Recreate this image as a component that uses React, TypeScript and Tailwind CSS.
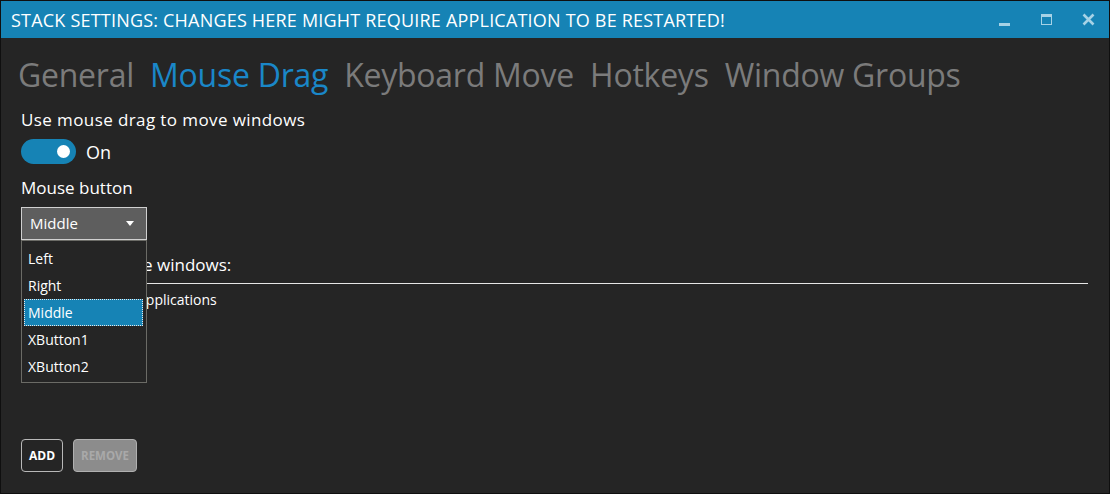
import React from "react";

const TABS = [
  { name: "General", active: false },
  { name: "Mouse Drag", active: true },
  { name: "Keyboard Move", active: false },
  { name: "Hotkeys", active: false },
  { name: "Window Groups", active: false },
];

const BUTTONS = ["Left", "Right", "Middle", "XButton1", "XButton2"];

export default function App() {
  return (
    <div className="w-[1110px] h-[494px] border border-[#0f0f0f] bg-[#252525] flex flex-col overflow-hidden font-['Open_Sans',sans-serif] text-white">
      {/* title bar */}
      <div className="h-[37px] bg-[#1683b5] flex items-center pl-[10px] shrink-0">
        <span className="text-[18px] leading-none tracking-[0.2px]">
          STACK SETTINGS: CHANGES HERE MIGHT REQUIRE APPLICATION TO BE RESTARTED!
        </span>
        <div className="ml-auto flex items-center h-full">
          <div className="w-[42px] h-full flex items-center justify-center">
            <div className="w-[11px] h-[3px] bg-[#a6d2e6] mt-[10px]" />
          </div>
          <div className="w-[42px] h-full flex items-center justify-center">
            <div className="w-[11px] h-[11px] border-[#a6d2e6] border border-t-[3px] -mt-[1px]" />
          </div>
          <div className="w-[42px] h-full flex items-center justify-center">
            <svg width="13" height="13" viewBox="0 0 13 13">
              <path d="M1.5 1.5 L11.5 11.5 M11.5 1.5 L1.5 11.5" stroke="#a6d2e6" strokeWidth="2.6" />
            </svg>
          </div>
        </div>
      </div>

      {/* content */}
      <div className="flex-1 flex flex-col px-[20px] relative">
        <div className="flex gap-[16px] mt-[13px] -ml-[3px] text-[32px] leading-[48px] tracking-[-0.25px]">
          {TABS.map((t) => (
            <span key={t.name} className={t.active ? "text-[#1a87c8]" : "text-[#7b7b7b]"}>
              {t.name}
            </span>
          ))}
        </div>

        <div className="mt-[10px] text-[17px] leading-[22px] tracking-[0.4px]">Use mouse drag to move windows</div>
        <div className="flex items-center gap-[10px] mt-[8px]">
          <div className="w-[55px] h-[25px] rounded-full bg-[#1683b5] flex items-center justify-end pr-[6px]">
            <div className="w-[13px] h-[13px] rounded-full bg-white" />
          </div>
          <span className="text-[18px] leading-[22px]">On</span>
        </div>

        <div className="mt-[13px] text-[17px] leading-[22px]">Mouse button</div>
        <div className="mt-[8px] w-[126px] h-[33px] bg-[#5e5e5e] border border-[#d0d0d0] flex items-center pl-[8px] pr-[12px] text-[15px]">
          <span>Middle</span>
          <svg className="ml-auto" width="8" height="5" viewBox="0 0 8 5">
            <path d="M0 0 H8 L4 5 Z" fill="#ffffff" />
          </svg>
        </div>

        <div className="mt-[14px] text-[17px] leading-[22px]">Disable on these windows:</div>
        <div className="mt-[7px] h-[1px] bg-[#e6e6e6] mr-[1px]" />
        <div className="mt-[7px] pl-[116px] text-[14px] leading-[18px]">Applications</div>

        <div className="mt-auto mb-[21px] flex gap-[10px]">
          <button className="h-[33px] px-[7px] rounded-[4px] border border-[#b8b8b8] text-[12px] font-bold text-white">
            ADD
          </button>
          <button className="h-[33px] px-[7px] rounded-[4px] border border-[#b0b0b0] bg-[#8c8c8c] text-[11.5px] font-bold text-[#a9a9a9]">
            REMOVE
          </button>
        </div>

        {/* open dropdown list */}
        <div className="absolute left-[20px] top-[202px] w-[126px] h-[143px] bg-[#252525] border border-[#6b6b66] pt-[4px] px-[2px] text-[14px]">
          {BUTTONS.map((b) => (
            <div
              key={b}
              className={
                b === "Middle"
                  ? "h-[27px] flex items-center pl-[3px] mr-[1px] bg-[#1683b5] border border-dotted border-[#e8e8e8]"
                  : "h-[27px] flex items-center pl-[4px]"
              }
            >
              {b}
            </div>
          ))}
        </div>
      </div>
    </div>
  );
}
